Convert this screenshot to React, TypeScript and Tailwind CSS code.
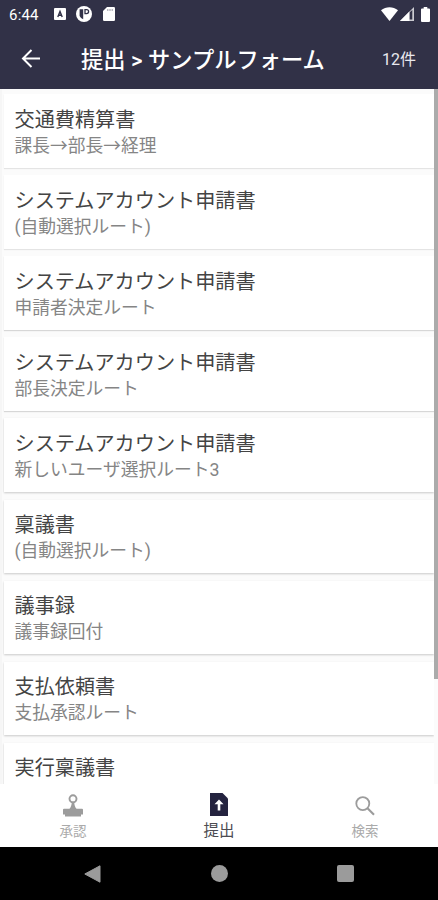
import { ReactNode } from "react";
import clsx from "clsx";

interface FormRoute {
  id: number
  name: string
  route?: string
}

const forms: FormRoute[] = [
  { id: 1, name: "交通費精算書", route: "課長→部長→経理" },
  { id: 2, name: "システムアカウント申請書", route: "(自動選択ルート)" },
  { id: 3, name: "システムアカウント申請書", route: "申請者決定ルート" },
  { id: 4, name: "システムアカウント申請書", route: "部長決定ルート" },
  { id: 5, name: "システムアカウント申請書", route: "新しいユーザ選択ルート3" },
  { id: 6, name: "稟議書", route: "(自動選択ルート)" },
  { id: 7, name: "議事録", route: "議事録回付" },
  { id: 8, name: "支払依頼書", route: "支払承認ルート" },
  { id: 9, name: "実行稟議書" },
];

// the elevation shadow gets stronger towards the bottom of the screen
function cardShadow(index: number) {
  if (index < 2) return "shadow-[0_1px_1px_rgba(0,0,0,0.09)]";
  if (index < 4) return "shadow-[0_1px_1px_rgba(0,0,0,0.14)]";
  return "shadow-[0_1px_2px_rgba(0,0,0,0.2)]";
}

function StatusBar() {
  return (
    <div className="flex h-7 items-center justify-between pl-[9px] pr-[8px] text-white">
      <div className="flex items-center">
        <span className="w-[45px] pt-px text-[15px] leading-7 tracking-[0.2px]">6:44</span>
        <svg className="h-[12px] w-[12px]" viewBox="0 0 12 12">
          <rect width="12" height="12" rx="1" fill="currentColor" />
          <path d="M3.8 9 6 3.4 8.2 9M4.6 7.2h2.8" fill="none" stroke="#313147" strokeWidth="1.4" />
        </svg>
        <svg className="ml-[10px] h-4 w-4" viewBox="0 0 16 16">
          <circle cx="8" cy="8" r="8" fill="currentColor" />
          <path d="M3.6 3.2h3.6v10A6.5 6.5 0 0 1 3.6 10z" fill="#313147" />
          <path d="M9 3.6h1.6a2 2 0 0 1 0 4H9z" fill="none" stroke="#313147" strokeWidth="1.3" />
        </svg>
        <svg className="ml-[11px] h-[14px] w-3" viewBox="0 0 12 14">
          <path d="M4 0h6.8A1.2 1.2 0 0 1 12 1.2v11.6a1.2 1.2 0 0 1-1.2 1.2H1.2A1.2 1.2 0 0 1 0 12.8V4z" fill="currentColor" />
          <path d="M4.8 2.2v1.6M7 2.2v1.6M9.2 2.2v1.6" stroke="#313147" strokeOpacity=".6" />
        </svg>
      </div>
      <div className="flex items-center">
        <svg className="h-[14px] w-[17px]" viewBox="0 0 17 14">
          <path d="M0 3.3C5-.9 12-.9 17 3.3L8.5 14z" fill="currentColor" />
        </svg>
        <svg className="ml-[2px] h-[14px] w-[14px]" viewBox="0 0 14 14">
          <path d="M14 0v14H0z" fill="currentColor" fillOpacity=".75" />
          <path d="M9.4 5.5 12.3 3v9.5H9.4z" fill="#313147" />
          <path d="M0 14 9.4 4.6V14z" fill="currentColor" />
        </svg>
        <svg className="ml-[7px] h-[15px] w-[9px]" viewBox="0 0 9 15">
          <path d="M2.7 0h3.6v1.5H8a1 1 0 0 1 1 1V14a1 1 0 0 1-1 1H1a1 1 0 0 1-1-1V2.5a1 1 0 0 1 1-1h1.7z" fill="currentColor" />
        </svg>
      </div>
    </div>
  );
}

function StampIcon() {
  return (
    <svg className="mt-[2px] h-[23px] w-5" viewBox="0 0 20 23">
      <circle cx="10" cy="4.8" r="3.5" fill="none" stroke="currentColor" strokeWidth="1.9" />
      <path d="M8.8 8h2.4c.1 3 .8 5 2.3 6.800H19a1 1 0 0 1 1 1v4.700H0v-4.700a1 1 0 0 1 1-1h5.500C8 13 8.700 11 8.800 8z" fill="currentColor" />
      <path d="M2 20h16v2.500H2z" fill="currentColor" />
    </svg>
  );
}

function SubmitIcon() {
  return (
    <svg className="h-[23px] w-[18px]" viewBox="0 0 18 23">
      <path d="M0 0h12.5L18 5.5V23H0z" fill="currentColor" />
      <path d="M9 6.5 13.5 11.2h-3.2v6.3H7.7v-6.3H4.5z" fill="white" />
    </svg>
  );
}

function SearchIcon() {
  return (
    <svg className="mt-[3px] h-5 w-5" viewBox="0 0 20 20" fill="none" stroke="currentColor">
      <circle cx="7.8" cy="7.6" r="6.5" strokeWidth="1.8" />
      <path d="m12.5 12.3 6.5 6.5" strokeWidth="2.1" />
    </svg>
  );
}

function NavItem({ label, active = false, children }: { label: string; active?: boolean; children: ReactNode }) {
  return (
    <div className={clsx("flex flex-1 flex-col items-center", active ? "text-[#24233f]" : "text-[#9c9c9c]")}>
      <div className="flex h-[25px] items-center">{children}</div>
      <span className={clsx("mt-1 leading-5", active ? "text-[15.5px] text-[#4c4c52]" : "text-[13.5px] text-[#aaaaaa]")}>
        {label}
      </span>
    </div>
  );
}

export default function App() {
  return (
    <div className="flex h-[900px] w-[438px] flex-col overflow-hidden bg-white font-[Roboto,'Noto_Sans_CJK_JP',sans-serif]">
      <header className="h-[89px] shrink-0 bg-[#313147] text-white">
        <StatusBar />
        <div className="flex h-[61px] items-center pl-[21px] pr-[22px]">
          <svg className="h-5 w-5" viewBox="0 0 20 20" fill="none" stroke="currentColor" strokeWidth="2">
            <path d="M19 9.5H2M10.500 1 2 9.500l8.500 8.500" />
          </svg>
          <h1 className="ml-10 flex-1 whitespace-nowrap pt-[3px] text-[22.25px] font-medium leading-8">提出 &gt; サンプルフォーム</h1>
          <span className="pt-[2px] text-[16px] leading-6 text-[#e8e8ee]">12件</span>
        </div>
      </header>

      <main className="flex min-h-0 flex-1 bg-[#fbfbfb]">
        <ul className="flex min-w-0 flex-1 flex-col gap-[7.5px] overflow-hidden border-l-2 border-[#f6f6f6] pl-[2px] pt-[5px]">
          {forms.map((form, index) => (
            <li
              key={form.id}
              className={clsx("h-[73.62px] shrink-0 bg-white pl-[10.5px] pt-[11.5px]", cardShadow(index))}
            >
              <p className="text-[20.15px] leading-[28px] text-[#444444]">{form.name}</p>
              {form.route && <p className="text-[17.75px] leading-[24px] text-[#858585]">{form.route}</p>}
            </li>
          ))}
        </ul>
        <div className="w-1 shrink-0">
          <div className="h-[590px] bg-[#ababab]" />
        </div>
      </main>

      <nav className="flex h-[63px] shrink-0 bg-white pt-[8px]">
        <NavItem label="承認"><StampIcon /></NavItem>
        <NavItem label="提出" active><SubmitIcon /></NavItem>
        <NavItem label="検索"><SearchIcon /></NavItem>
      </nav>

      <div className="flex h-[53px] shrink-0 items-center justify-between bg-black pl-[84px] pr-[84px] text-[#9b9b9b]">
        <svg className="h-[18px] w-[17px]" viewBox="0 0 17 18">
          <path d="M16 .8v16.4L.8 9z" fill="currentColor" stroke="currentColor" strokeLinejoin="round" />
        </svg>
        <div className="size-[17px] rounded-full bg-[#9b9b9b]" />
        <div className="size-[17px] rounded-[2px] bg-[#9b9b9b]" />
      </div>
    </div>
  );
}
